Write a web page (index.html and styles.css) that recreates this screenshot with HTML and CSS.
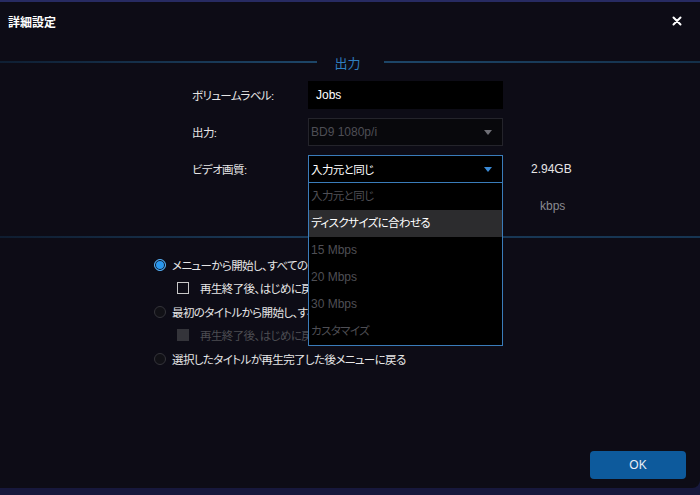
FILE: index.html
```html
<!DOCTYPE html>
<html lang="ja">
<head>
    <meta charset="UTF-8">
    <title>詳細設定</title>
    <link rel="stylesheet" href="styles.css">
</head>
<body>
    <div class="dialog">
        <div class="header">
            <span class="title">詳細設定</span>
            <svg class="close" width="10" height="10" viewBox="0 0 10 10">
                <path d="M1.5 1.5 L8.5 8.5 M8.5 1.5 L1.5 8.5" stroke="#fff" stroke-width="2" stroke-linecap="round"/>
            </svg>
        </div>

        <div class="section-title">
            <span class="line left"></span>
            <span class="section-name">出力</span>
            <span class="line right"></span>
        </div>

        <div class="form">
            <div class="row">
                <span class="label">ボリュームラベル:</span>
                <div class="field input latin">Jobs</div>
            </div>
            <div class="row">
                <span class="label">出力:</span>
                <div class="field select disabled latin">BD9 1080p/i<span class="arrow"></span></div>
            </div>
            <div class="row">
                <span class="label">ビデオ画質:</span>
                <div class="field select active">入力元と同じ<span class="arrow"></span>
                    <ul class="menu">
                        <li class="dim">入力元と同じ</li>
                        <li class="hover">ディスクサイズに合わせる</li>
                        <li class="dim latin">15 Mbps</li>
                        <li class="dim latin">20 Mbps</li>
                        <li class="dim latin">30 Mbps</li>
                        <li class="dim">カスタマイズ</li>
                    </ul>
                </div>
                <span class="extra latin">2.94GB</span>
            </div>
            <div class="row">
                <span class="label"></span>
                <div class="field blank"></div>
                <span class="extra kbps latin">kbps</span>
            </div>
        </div>

        <div class="divider"></div>

        <div class="options">
            <div class="option">
                <span class="radio checked"></span>
                <span>メニューから開始し、すべてのタイトルを連続再生</span>
            </div>
            <div class="option sub">
                <span class="check"></span>
                <span>再生終了後、はじめに戻る</span>
            </div>
            <div class="option">
                <span class="radio"></span>
                <span>最初のタイトルから開始し、すべてのタイトルを連続再生</span>
            </div>
            <div class="option sub off">
                <span class="check"></span>
                <span>再生終了後、はじめに戻る</span>
            </div>
            <div class="option">
                <span class="radio"></span>
                <span>選択したタイトルが再生完了した後メニューに戻る</span>
            </div>
        </div>

        <div class="footer">
            <button class="ok latin">OK</button>
        </div>
    </div>
</body>
</html>
```

FILE: styles.css
```css
* {
    margin: 0;
    padding: 0;
    box-sizing: border-box;
}

body {
    width: 700px;
    height: 495px;
    overflow: hidden;
    background: #17183c;
    font-family: "Liberation Sans", "Noto Sans CJK JP", sans-serif;
    font-size: 11.5px;
    letter-spacing: -0.6px;
    font-feature-settings: "palt";
    color: #e6e6e6;
}

.latin {
    font-size: 12px;
    letter-spacing: 0;
}

.dialog {
    width: 700px;
    height: 488px;
    background: #0d0c16;
    border-top: 2px solid #272b62;
    border-bottom-right-radius: 8px;
    display: flex;
    flex-direction: column;
}

.header {
    height: 38px;
    padding: 0 18px 0 8px;
    display: flex;
    align-items: center;
    justify-content: space-between;
}

.title {
    font-size: 12px;
    font-weight: bold;
    letter-spacing: 0;
    color: #fff;
}

.section-title {
    margin-top: 11px;
    height: 22px;
    display: flex;
    align-items: center;
}

.line {
    flex: 1;
    height: 2px;
}

.line.left {
    background: linear-gradient(to right, #0f1f33, #1d4668);
}

.line.right {
    background: linear-gradient(to right, #1d4668, #14304a);
}

.section-name {
    margin: 0 23px 0 18px;
    font-size: 13px;
    letter-spacing: 0;
    color: #2f7fc0;
}

.form {
    margin-top: 8px;
    padding-left: 192px;
    display: flex;
    flex-direction: column;
    gap: 9px;
}

.row {
    display: flex;
    align-items: center;
    height: 28px;
}

.label {
    width: 116px;
}

.field {
    position: relative;
    width: 195px;
    height: 28px;
    display: flex;
    align-items: center;
}

.input {
    background: #000;
    padding-left: 8px;
    color: #fff;
}

.select {
    padding-left: 2px;
    border: 1px solid #24242b;
    background: #08080c;
}

.select.disabled {
    color: #4e4e55;
}

.select.active {
    border-color: #3a7cba;
    background: #000;
    color: #fff;
}

.blank {
    visibility: hidden;
}

.arrow {
    position: absolute;
    right: 10px;
    top: 11px;
    border-left: 4px solid transparent;
    border-right: 4px solid transparent;
    border-top: 5px solid #6f6f76;
}

.active .arrow {
    border-top-color: #3a8ad6;
}

.menu {
    position: absolute;
    top: 26px;
    left: -1px;
    width: 195px;
    list-style: none;
    background: #000;
    border: 1px solid #3a7cba;
    z-index: 2;
}

.menu li {
    height: 27px;
    line-height: 27px;
    padding-left: 2px;
}

.menu li.dim {
    color: #4f4f55;
}

.menu li.hover {
    background: #2c2c2e;
    color: #fff;
}

.extra {
    margin-left: 28px;
}

.kbps {
    margin-left: 37px;
    color: #8a8a90;
}

.divider {
    margin-top: 16px;
    height: 2px;
    background: linear-gradient(to right, #0f1d30, #1a3a58 40%, #163552);
}

.options {
    margin-top: 15px;
    padding-left: 154px;
    display: flex;
    flex-direction: column;
}

.option {
    height: 23.5px;
    display: flex;
    align-items: center;
    gap: 6px;
    white-space: nowrap;
}

.option.sub {
    padding-left: 23px;
    gap: 11px;
}

.option.off {
    color: #4c4c52;
}

.radio {
    width: 12px;
    height: 12px;
    border-radius: 50%;
    border: 1px solid #34343a;
    background: #111116;
}

.radio.checked {
    border: 1px solid #58aef0;
    background: #2a98ee;
    box-shadow: inset 0 0 0 1px #0d0c16;
}

.check {
    width: 12px;
    height: 12px;
    border: 1px solid #c8c8c8;
}

.off .check {
    border-color: #34343a;
    background: #34343a;
}

.footer {
    margin-top: auto;
    padding: 0 14px 9px 0;
    display: flex;
    justify-content: flex-end;
}

.ok {
    width: 96px;
    height: 28px;
    border: none;
    border-radius: 4px;
    background: #0d5a9c;
    color: #e8eef6;
    font-family: "Liberation Sans", sans-serif;
}
```
